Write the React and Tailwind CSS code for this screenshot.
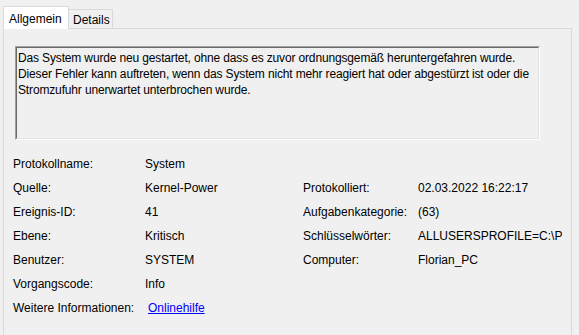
import React from 'react';

const rows = [
  { label: 'Protokollname:', value: 'System' },
  { label: 'Quelle:', value: 'Kernel-Power', label2: 'Protokolliert:', value2: '02.03.2022 16:22:17' },
  { label: 'Ereignis-ID:', value: '41', label2: 'Aufgabenkategorie:', value2: '(63)' },
  { label: 'Ebene:', value: 'Kritisch', label2: 'Schlüsselwörter:', value2: 'ALLUSERSPROFILE=C:\\P' },
  { label: 'Benutzer:', value: 'SYSTEM', label2: 'Computer:', value2: 'Florian_PC' },
  { label: 'Vorgangscode:', value: 'Info' },
];

function App() {
  return (
    <div
      className="h-[335px] w-[579px] overflow-hidden bg-[#f0f0f0] text-[12px] text-black"
      style={{ fontFamily: '"Liberation Sans", Arial, sans-serif' }}
    >
      {/* tabs */}
      <div className="flex items-end pl-[3px] pt-[6px]">
        <div className="relative z-10 -mb-px flex h-[23px] w-[66px] items-start border border-b-0 border-[#d9d9d9] bg-white pl-[5px] pt-[3px]">
          Allgemein
        </div>
        <div className="flex h-[19px] w-[44px] items-start border border-b-0 border-l-0 border-[#d9d9d9] bg-[#f0f0f0] pl-[4px] pt-[1px]">
          Details
        </div>
      </div>

      {/* tab page */}
      <div className="ml-[3px] h-[320px] w-[569px] border border-[#d9d9d9] bg-[#f0f0f0] pl-[11px] pt-[17px]">
        <div className="h-[94px] w-[525px] border-t border-l border-t-[#a0a0a0] border-l-[#a0a0a0] border-r border-b border-r-white border-b-white">
          <div className="h-full w-full overflow-hidden whitespace-nowrap border-t border-l border-t-[#696969] border-l-[#696969] border-r border-b border-r-[#e3e3e3] border-b-[#e3e3e3] px-[1px] pt-[2px] leading-[16px] tracking-[-0.15px]">
            Das System wurde neu gestartet, ohne dass es zuvor ordnungsgemäß heruntergefahren wurde.
            <br />
            Dieser Fehler kann auftreten, wenn das System nicht mehr reagiert hat oder abgestürzt ist oder die
            <br />
            Stromzufuhr unerwartet unterbrochen wurde.
          </div>
        </div>

        <div className="mt-[12px] -ml-[2px]">
          {rows.map((r) => (
            <div key={r.label} className="flex h-[24px] items-center">
              <div className="w-[132px]">{r.label}</div>
              <div className="w-[158px]">{r.value}</div>
              {r.label2 && (
                <>
                  <div className="w-[115px]">{r.label2}</div>
                  <div>{r.value2}</div>
                </>
              )}
            </div>
          ))}
          <div className="flex h-[24px] items-center">
            <div className="w-[135px]">Weitere Informationen:</div>
            <a href="#" className="text-[#0000ff] underline">Onlinehilfe</a>
          </div>
        </div>
      </div>
    </div>
  );
}

export default App;
